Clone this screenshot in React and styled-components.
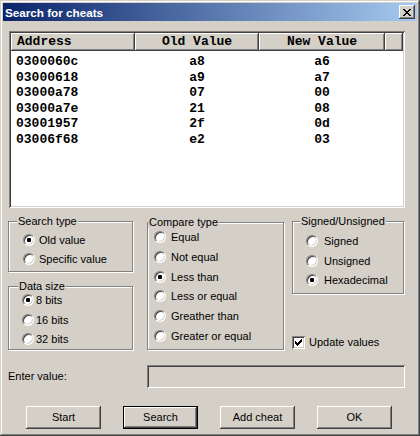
import React from "react";
import styled, { createGlobalStyle } from "styled-components";

const GlobalStyle = createGlobalStyle`
  html, body {
    margin: 0;
    padding: 0;
    background: #d4d0c8;
  }
  body {
    font-family: "Liberation Sans", Arial, sans-serif;
    font-size: 11px;
    color: #000;
  }
`;

const Window = styled.div`
  width: 420px;
  height: 436px;
  box-sizing: border-box;
  padding: 3px;
  background: #d4d0c8;
  box-shadow: inset -1px -1px #404040, inset 1px 1px #d4d0c8,
    inset -2px -2px #808080, inset 2px 2px #fff;
  display: flex;
  flex-direction: column;
`;

const TitleBar = styled.div`
  height: 18px;
  flex: none;
  display: flex;
  align-items: center;
  justify-content: space-between;
  padding: 0 2px;
  background: linear-gradient(to right, #0a246a, #a6caf0);
  color: #fff;
  font-weight: bold;
  font-size: 11.7px;
`;

const CloseButton = styled.div`
  width: 16px;
  height: 14px;
  box-sizing: border-box;
  background: #d4d0c8;
  box-shadow: inset -1px -1px #404040, inset 1px 1px #fff,
    inset -2px -2px #808080;
  display: flex;
  align-items: center;
  justify-content: center;
  padding-right: 1px;
`;

const Body = styled.div`
  display: flex;
  flex-direction: column;
  padding: 0 12px 0 5px;
`;

const ListBox = styled.div`
  margin: 10px 0 0 1px;
  height: 177px;
  box-sizing: border-box;
  padding: 2px;
  background: #fff;
  box-shadow: inset 1px 1px #808080, inset -1px -1px #fff,
    inset 2px 2px #404040, inset -2px -2px #d4d0c8;
  font-family: "Liberation Mono", "DejaVu Sans Mono", monospace;
  font-weight: bold;
  font-size: 13px;
`;

const Columns = styled.div`
  display: grid;
  grid-template-columns: 124px 124px 126px 1fr;
`;

const Header = styled(Columns)`
  height: 18px;
`;

const HeaderCell = styled.div`
  background: #d4d0c8;
  box-shadow: inset -1px -1px #404040, inset 1px 1px #fff,
    inset -2px -2px #808080;
  display: flex;
  align-items: center;
  justify-content: ${(p) => (p.$left ? "flex-start" : "center")};
  padding-left: ${(p) => (p.$left ? "6px" : "0")};
  padding-bottom: 1px;
`;

const Rows = styled.div`
  padding-top: 3px;
`;

const Row = styled(Columns)`
  height: 15.6px;
  line-height: 15.6px;
`;

const Cell = styled.div`
  text-align: ${(p) => (p.$left ? "left" : "center")};
  padding-left: ${(p) => (p.$left ? "5px" : "0")};
`;

const Lower = styled.div`
  display: flex;
  align-items: flex-start;
  margin-top: 7px;
  height: 135px;
`;

const Column = styled.div`
  display: flex;
  flex-direction: column;
  width: ${(p) => p.$w}px;
  margin-left: ${(p) => p.$ml || 0}px;
  height: 135px;
  gap: 8px;
`;

const GroupBox = styled.fieldset`
  margin: ${(p) => p.$mt || 0}px 0 0 0;
  padding: ${(p) => p.$pt}px 0 0 0;
  min-width: 0;
  width: calc(100% - 1px);
  height: ${(p) => p.$h}px;
  box-sizing: border-box;
  border: 1px solid #808080;
  box-shadow: inset 1px 1px #fff, 1px 1px #fff;
  display: flex;
  flex-direction: column;
  gap: ${(p) => p.$gap}px;
`;

const Legend = styled.legend`
  margin-left: ${(p) => p.$ml}px;
  padding: 0 1px;
  line-height: 12px;
  font-size: 11px;
  background: #d4d0c8;
`;

const OptionRow = styled.label`
  display: flex;
  align-items: center;
  height: 16px;
  padding-left: ${(p) => p.$indent}px;
  gap: ${(p) => p.$gap}px;
  white-space: nowrap;
`;

const Radio = styled.span`
  position: relative;
  flex: none;
  width: 12px;
  height: 12px;
  box-sizing: border-box;
  border-radius: 50%;
  background: #fff;
  border: 1px solid;
  border-color: #808080 #fff #fff #808080;
  box-shadow: inset 1px 1px #404040, inset -1px -1px #d4d0c8;

  &::after {
    content: "";
    display: ${(p) => (p.$checked ? "block" : "none")};
    position: absolute;
    left: 3px;
    top: 3px;
    width: 4px;
    height: 4px;
    border-radius: 1px;
    background: #000;
  }
`;

const CheckRow = styled(OptionRow)`
  margin-top: auto;
`;

const CheckBox = styled.span`
  flex: none;
  width: 13px;
  height: 13px;
  box-sizing: border-box;
  background: #fff;
  box-shadow: inset 1px 1px #808080, inset -1px -1px #fff,
    inset 2px 2px #404040, inset -2px -2px #d4d0c8;
  display: flex;
  align-items: center;
  justify-content: center;
`;

const EnterRow = styled.div`
  display: flex;
  align-items: center;
  margin-top: 15px;
  height: 23px;
`;

const Label = styled.span`
  width: 139px;
  padding-bottom: 1px;
`;

const ValueInput = styled.div`
  width: 258px;
  height: 23px;
  box-sizing: border-box;
  background: #d4d0c8;
  box-shadow: inset 1px 1px #808080, inset -1px -1px #fff,
    inset 2px 2px #404040, inset -2px -2px #d4d0c8;
`;

const ButtonRow = styled.div`
  display: flex;
  gap: 22px;
  margin-top: 18px;
  padding-left: 18px;
`;

const Button = styled.button`
  width: 75px;
  height: 23px;
  box-sizing: border-box;
  margin: 0;
  padding: 0 0 1px;
  background: #d4d0c8;
  border: ${(p) => (p.$default ? "1px solid #000" : "none")};
  box-shadow: inset -1px -1px #404040, inset 1px 1px #fff,
    inset -2px -2px #808080;
  font-family: "Liberation Sans", Arial, sans-serif;
  font-size: 11px;
  color: #000;
`;

const PixelIcon = ({ rows, color = "#000" }) => (
  <svg
    width={rows[0].length}
    height={rows.length}
    viewBox={`0 0 ${rows[0].length} ${rows.length}`}
    shapeRendering="crispEdges"
  >
    {rows.map((r, y) =>
      r.split("").map((c, x) =>
        c === "x" ? <rect key={`${x}-${y}`} x={x} y={y} width="1" height="1" fill={color} /> : null
      )
    )}
  </svg>
);

const closeGlyph = [
  "xx....xx",
  ".xx..xx.",
  "..xxxx..",
  "...xx...",
  "..xxxx..",
  ".xx..xx.",
  "xx....xx",
];

const checkGlyph = [
  "......x",
  ".....xx",
  "x...xxx",
  "xx.xxx.",
  "xxxxx..",
  ".xxx...",
  "..x....",
];

const results = [
  ["0300060c", "a8", "a6"],
  ["03000618", "a9", "a7"],
  ["03000a78", "07", "00"],
  ["03000a7e", "21", "08"],
  ["03001957", "2f", "0d"],
  ["03006f68", "e2", "03"],
];

const Option = ({ label, checked, indent, gap }) => (
  <OptionRow $indent={indent} $gap={gap}>
    <Radio $checked={checked} />
    {label}
  </OptionRow>
);

export default function App() {
  return (
    <>
      <GlobalStyle />
      <Window>
        <TitleBar>
          <span>Search for cheats</span>
          <CloseButton>
            <PixelIcon rows={closeGlyph} />
          </CloseButton>
        </TitleBar>
        <Body>
          <ListBox>
            <Header>
              <HeaderCell $left>Address</HeaderCell>
              <HeaderCell>Old Value</HeaderCell>
              <HeaderCell>New Value</HeaderCell>
              <HeaderCell />
            </Header>
            <Rows>
              {results.map(([addr, oldV, newV]) => (
                <Row key={addr}>
                  <Cell $left>{addr}</Cell>
                  <Cell>{oldV}</Cell>
                  <Cell>{newV}</Cell>
                  <Cell />
                </Row>
              ))}
            </Rows>
          </ListBox>

          <Lower>
            <Column $w={126}>
              <GroupBox $h={57} $pt={5} $gap={3}>
                <Legend $ml={8}>Search type</Legend>
                <Option label="Old value" checked indent={14} gap={4} />
                <Option label="Specific value" indent={14} gap={4} />
              </GroupBox>
              <GroupBox $h={70} $pt={0} $gap={3.5}>
                <Legend $ml={9}>Data size</Legend>
                <Option label="8 bits" checked indent={13} gap={2} />
                <Option label="16 bits" indent={13} gap={2} />
                <Option label="32 bits" indent={13} gap={2} />
              </GroupBox>
            </Column>

            <Column $w={138} $ml={13}>
              <GroupBox $h={134} $mt={1} $pt={1} $gap={3.8}>
                <Legend $ml={0}>Compare type</Legend>
                <Option label="Equal" indent={6} gap={5} />
                <Option label="Not equal" indent={6} gap={5} />
                <Option label="Less than" checked indent={6} gap={5} />
                <Option label="Less or equal" indent={6} gap={5} />
                <Option label="Greather than" indent={6} gap={5} />
                <Option label="Greater or equal" indent={6} gap={5} />
              </GroupBox>
            </Column>

            <Column $w={113} $ml={7}>
              <GroupBox $h={79} $pt={6} $gap={3.5}>
                <Legend $ml={7}>Signed/Unsigned</Legend>
                <Option label="Signed" indent={13} gap={6} />
                <Option label="Unsigned" indent={13} gap={6} />
                <Option label="Hexadecimal" checked indent={13} gap={6} />
              </GroupBox>
              <CheckRow $indent={0} $gap={4}>
                <CheckBox>
                  <PixelIcon rows={checkGlyph} />
                </CheckBox>
                Update values
              </CheckRow>
            </Column>
          </Lower>

          <EnterRow>
            <Label>Enter value:</Label>
            <ValueInput />
          </EnterRow>

          <ButtonRow>
            <Button>Start</Button>
            <Button $default>Search</Button>
            <Button>Add cheat</Button>
            <Button>OK</Button>
          </ButtonRow>
        </Body>
      </Window>
    </>
  );
}
